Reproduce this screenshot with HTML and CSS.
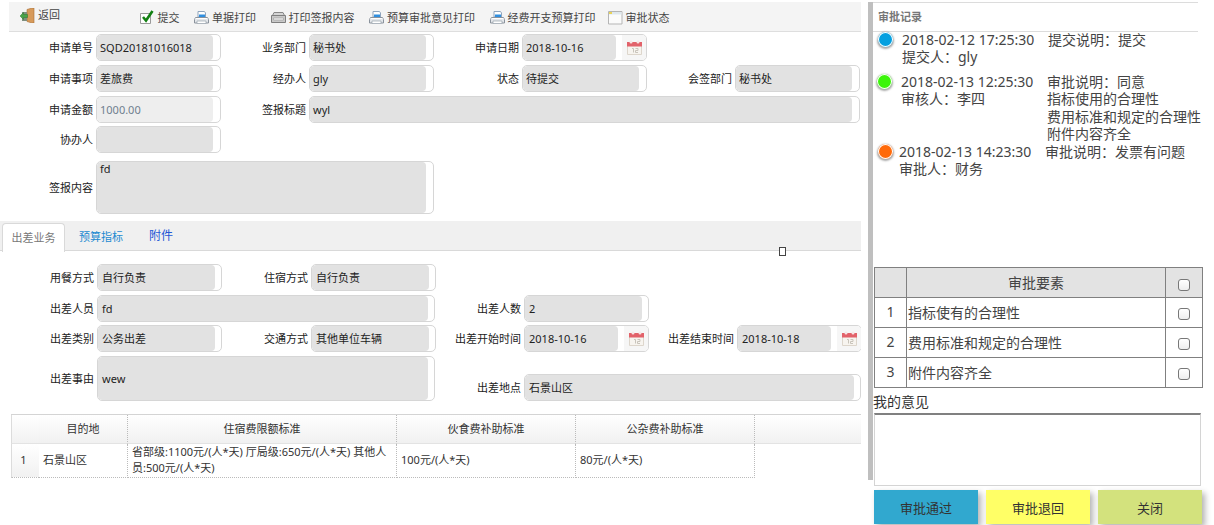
FILE: index.html
```html
<!DOCTYPE html>
<html lang="zh-CN">
<head>
<meta charset="utf-8">
<title>审批</title>
<link rel="stylesheet" href="styles.css">
</head>
<body>
<svg class="defs" width="0" height="0" aria-hidden="true">
  <symbol id="i-print" viewBox="0 0 15 15">
    <path d="M4 1.500h6.500L11.500 3v4h-7.500z" fill="#fff" stroke="#8ea4bd"/>
    <path d="M5 4.500h6v3H5z" fill="#2f8fe0"/>
    <path d="M1.500 7.500h12l1 2v3.500h-14V9.500z" fill="#e3e6ea" stroke="#8a929c"/>
    <path d="M3 11h9v2.500H3z" fill="#fff" stroke="#9aa3ad" stroke-width=".7"/>
    <path d="M1.500 8.500h12" stroke="#fff"/>
  </symbol>
  <symbol id="i-cal" viewBox="0 0 15 15">
    <path d="M.5 3h14v11.500H.5z" fill="#f7f4ef" stroke="#ddd6cc"/>
    <path d="M0 2h15v4.500H0z" fill="#e2626a"/>
    <circle cx="4" cy="2" r="1.500" fill="#f6e6e6"/>
    <circle cx="11" cy="2" r="1.500" fill="#f6e6e6"/>
    <path d="M5 8.500h1.500v4M8.500 8.500h2.500v2h-2.500v2h2.500" fill="none" stroke="#c9c4bb"/>
  </symbol>
</svg>

<main class="left">
  <nav class="toolbar">
    <a class="tool back">
      <svg class="icon" viewBox="0 0 15 15"><path d="M7 1.500l5-1.500h2v15h-2l-5-1.500z" fill="#d79a5a" stroke="#a76f35" stroke-width=".6"/><path d="M2 4h5v9H2z" fill="#7f8f7f"/><path d="M0 8l3.500-3.500v2h4v3h-4v2z" fill="#4aa34a" stroke="#2f7a2f" stroke-width=".5"/></svg>
      <span>返回</span>
    </a>
    <a class="tool">
      <svg class="icon" viewBox="0 0 15 15"><path d="M.5 3.500h10v10H.5z" fill="#fff" stroke="#9a9a9a"/><path d="M3 7l3 3.500 6.500-9.500" fill="none" stroke="#128012" stroke-width="2.600"/></svg>
      <span>提交</span>
    </a>
    <a class="tool"><svg class="icon"><use href="#i-print"/></svg><span>单据打印</span></a>
    <a class="tool">
      <svg class="icon" viewBox="0 0 15 15"><path d="M3 2.500h9l1.500 3H1.500z" fill="#d5d5d5" stroke="#888"/><path d="M.5 5.500h14v7H.5z" fill="#c9c9c9" stroke="#7f7f7f"/><path d="M2.500 8h10v2h-10z" fill="#f2f2f2" stroke="#999" stroke-width=".6"/></svg>
      <span>打印签报内容</span>
    </a>
    <a class="tool"><svg class="icon"><use href="#i-print"/></svg><span>预算审批意见打印</span></a>
    <a class="tool"><svg class="icon"><use href="#i-print"/></svg><span>经费开支预算打印</span></a>
    <a class="tool status">
      <svg class="icon" viewBox="0 0 15 15"><path d="M.5 1.500h13.500v12.500H.5z" fill="#fbfbfb" stroke="#b5b5b5"/><path d="M1 2h12.500v2.500H1z" fill="#dfe8ee"/><path d="M1 2h3v2H1z" fill="#e8d35a"/></svg>
      <span>审批状态</span>
    </a>
  </nav>

  <section class="form top-form">
    <div class="cell"><label>申请单号</label><div class="field"><div class="val">SQD20181016018</div></div></div>
    <div class="cell"><label>业务部门</label><div class="field"><div class="val">秘书处</div></div></div>
    <div class="cell"><label>申请日期</label><div class="field"><div class="val date">2018-10-16</div><div class="cal"><svg class="cal-icon"><use href="#i-cal"/></svg></div></div></div>
    <div class="cell"></div>

    <div class="cell"><label>申请事项</label><div class="field"><div class="val">差旅费</div></div></div>
    <div class="cell"><label>经办人</label><div class="field"><div class="val">gly</div></div></div>
    <div class="cell"><label>状态</label><div class="field"><div class="val">待提交</div></div></div>
    <div class="cell"><label>会签部门</label><div class="field"><div class="val">秘书处</div></div></div>

    <div class="cell"><label>申请金额</label><div class="field"><div class="val off">1000.00</div></div></div>
    <div class="cell span3"><label>签报标题</label><div class="field"><div class="val">wyl</div></div></div>

    <div class="cell"><label>协办人</label><div class="field"><div class="val"></div></div></div>
    <div class="cell span3"></div>

    <div class="cell span2 tall"><label>签报内容</label><div class="field"><div class="val area">fd</div></div></div>
  </section>

  <div class="tabs">
    <a class="tab active">出差业务</a>
    <a class="tab budget">预算指标</a>
    <a class="tab attach">附件</a>
    <span class="stray"></span>
  </div>

  <section class="form trip-form">
    <div class="cell"><label>用餐方式</label><div class="field"><div class="val">自行负责</div></div></div>
    <div class="cell"><label>住宿方式</label><div class="field"><div class="val">自行负责</div></div></div>
    <div class="cell span2"></div>

    <div class="cell span2"><label>出差人员</label><div class="field"><div class="val">fd</div></div></div>
    <div class="cell"><label>出差人数</label><div class="field"><div class="val">2</div></div></div>
    <div class="cell"></div>

    <div class="cell"><label>出差类别</label><div class="field"><div class="val">公务出差</div></div></div>
    <div class="cell"><label>交通方式</label><div class="field"><div class="val">其他单位车辆</div></div></div>
    <div class="cell"><label>出差开始时间</label><div class="field"><div class="val date">2018-10-16</div><div class="cal"><svg class="cal-icon"><use href="#i-cal"/></svg></div></div></div>
    <div class="cell"><label>出差结束时间</label><div class="field"><div class="val date">2018-10-18</div><div class="cal"><svg class="cal-icon"><use href="#i-cal"/></svg></div></div></div>

    <div class="cell span2 tall"><label>出差事由</label><div class="field"><div class="val">wew</div></div></div>
    <div class="cell span2 low"><label>出差地点</label><div class="field"><div class="val">石景山区</div></div></div>
  </section>

  <table class="grid">
    <colgroup>
      <col class="c-n"><col class="c-dest"><col class="c-room"><col class="c-food"><col class="c-misc"><col class="c-rest">
    </colgroup>
    <thead>
      <tr><th class="no-line"></th><th>目的地</th><th>住宿费限额标准</th><th>伙食费补助标准</th><th>公杂费补助标准</th><th class="no-line"></th></tr>
    </thead>
    <tbody>
      <tr>
        <td class="num">1</td>
        <td>石景山区</td>
        <td>省部级:1100元/(人*天) 厅局级:650元/(人*天) 其他人员:500元/(人*天)</td>
        <td>100元/(人*天)</td>
        <td>80元/(人*天)</td>
        <td class="blank"></td>
      </tr>
    </tbody>
  </table>
</main>

<div class="splitter"></div>

<aside class="right">
  <h2 class="panel-title">审批记录</h2>
  <div class="timeline">
    <div class="entry first">
      <i class="dot blue"></i>
      <div class="who"><div>2018-02-12 17:25:30</div><div>提交人：gly</div></div>
      <div class="note"><div>提交说明：提交</div></div>
    </div>
    <div class="entry second">
      <i class="dot green"></i>
      <div class="who"><div>2018-02-13 12:25:30</div><div>审核人：李四</div></div>
      <div class="note"><div>审批说明：同意</div><div>指标使用的合理性</div><div>费用标准和规定的合理性</div><div>附件内容齐全</div></div>
    </div>
    <div class="entry third">
      <i class="dot orange"></i>
      <div class="who"><div>2018-02-13 14:23:30</div><div>审批人：财务</div></div>
      <div class="note"><div>审批说明：发票有问题</div></div>
    </div>
  </div>

  <table class="elements">
    <colgroup><col class="e-n"><col class="e-name"><col class="e-check"></colgroup>
    <thead>
      <tr><th></th><th>审批要素</th><th><input type="checkbox" class="box"></th></tr>
    </thead>
    <tbody>
      <tr><td class="e-num">1</td><td>指标使有的合理性</td><td class="e-box"><input type="checkbox" class="box"></td></tr>
      <tr><td class="e-num">2</td><td>费用标准和规定的合理性</td><td class="e-box"><input type="checkbox" class="box"></td></tr>
      <tr><td class="e-num">3</td><td>附件内容齐全</td><td class="e-box"><input type="checkbox" class="box"></td></tr>
    </tbody>
  </table>

  <div class="opinion-label">我的意见</div>
  <textarea class="opinion"></textarea>

  <div class="actions">
    <button class="btn pass">审批通过</button>
    <button class="btn back-btn">审批退回</button>
    <button class="btn close">关闭</button>
  </div>
</aside>
</body>
</html>
```

FILE: styles.css
```css
* { box-sizing: border-box; }
html, body { margin: 0; height: 525px; overflow: hidden; background: #fff; }
body {
  display: flex;
  align-items: flex-start;
  font-family: "Noto Sans", "Noto Sans CJK SC", sans-serif;
  font-size: 11px;
  color: #222;
}
.defs { position: absolute; }

/* left column */
.left { width: 861px; flex: none; height: 525px; overflow: hidden; padding-top: 2px; }

.toolbar {
  margin-left: 9px;
  height: 30px;
  background: #f4f4f4;
  border-bottom: 1px solid #dedede;
  display: flex;
  align-items: center;
  padding-left: 11px;
  gap: 14.500px;
  color: #444;
  padding-top: 2px;
}
.tool { display: flex; align-items: center; gap: 3px; white-space: nowrap; line-height: 14px; }
.tool.back { margin-right: 65px; margin-top: -5px; }
.tool.status { margin-left: -2.500px; }
.icon { width: 15px; height: 15px; flex: none; }

.form { display: grid; }
.top-form {
  margin-top: 2px;
  padding-left: 9px;
  grid-template-columns: repeat(4, 213px);
  grid-template-rows: 31px 31px 30px 35px 53px;
}
.trip-form {
  margin-top: 13px;
  padding-left: 10px;
  grid-template-columns: 214px 213px 213px 213px;
  grid-template-rows: 31px 30px 31px 45px;
}
.cell { display: flex; align-items: center; height: 27px; gap: 3px; }
.cell label { width: 84px; flex: none; text-align: right; color: #222; white-space: nowrap; padding-bottom: 1px; }
.field {
  flex: none;
  width: 125px;
  height: 100%;
  display: flex;
  border: 1px solid #d6d6d6;
  border-radius: 5px;
  background: #fff;
  overflow: hidden;
}
.val {
  flex: 1;
  min-width: 0;
  margin-right: 7px;
  background: #e2e2e2;
  border-radius: 4px;
  padding-left: 3px;
  padding-bottom: 1px;
  display: flex;
  align-items: center;
  font-size: 11px;
  color: #222;
  white-space: nowrap;
}
.trip-form .val { padding-left: 4px; margin-right: 6px; }
.val.date, .trip-form .val.date { flex: none; width: 93px; margin-right: 0; }
.val.off { background: #eee; color: #6f7f8f; }
.val.area { align-items: flex-start; padding-top: 0; line-height: 14px; }
.cal {
  margin-left: auto;
  width: 24px;
  background: #f6f6f6;
  display: flex;
  align-items: center;
  justify-content: center;
}
.cal-icon { width: 15px; height: 15px; }

.span2 { grid-column: span 2; }
.span3 { grid-column: span 3; }
.span2 .field, .span3 .field { flex: 1; margin-right: 1px; }
.trip-form .span2 .field { margin-right: 2px; }
.tall { height: 100%; }
.low { align-self: end; }

.tabs {
  position: relative;
  margin-top: 7px;
  height: 30px;
  background: #f0f0f0;
  border-bottom: 1px solid #d9d9d9;
  display: flex;
  padding-left: 2px;
}
.tab { white-space: nowrap; line-height: 28px; padding-top: 2px; }
.tab.active {
  width: 63px;
  height: 29px;
  margin-top: 2px;
  padding-top: 0;
  text-align: center;
  background: #fff;
  border: 1px solid #d9d9d9;
  border-bottom: 0;
  border-radius: 4px 4px 0 0;
  color: #777;
}
.tab.budget { margin-left: 14px; color: #1c8ad1; }
.tab.attach { margin-left: 26px; color: #2458d6; font-size: 12px; padding-top: 1px; }
.stray {
  position: absolute;
  left: 779px;
  top: 26px;
  width: 7px;
  height: 9px;
  border: 1px solid #444;
  background: #fff;
}

/* data table */
.grid {
  margin: 13px 0 0 11px;
  width: 850px;
  table-layout: fixed;
  border-collapse: separate;
  border-spacing: 0;
  border-top: 1px solid #d4d4d4;
  font-size: 11px;
  color: #333;
}
.c-n { width: 28px; }
.c-dest { width: 89px; }
.c-room { width: 269px; }
.c-food { width: 179px; }
.c-misc { width: 179px; }
.c-rest { width: 106px; }
.grid th {
  height: 29px;
  padding: 0 0 2px;
  font-weight: 400;
  background: linear-gradient(#fff, #f1f1f1);
  border-bottom: 1px solid #e3e3e3;
  border-right: 1px dotted #bbb;
}
.grid th.no-line { border-right: 0; }
.grid th:first-child { border-left: 1px solid #dcdcdc; }
.grid td {
  height: 34px;
  padding: 0 4px 1px;
  line-height: 16px;
  border-right: 1px dotted #bbb;
  border-bottom: 1px dotted #bbb;
}
.grid td.num {
  text-align: center;
  padding-right: 8px;
  background: linear-gradient(#fff, #f1f1f1);
  border-left: 1px solid #dcdcdc;
  border-right: 0;
}
.grid td.blank { border: 0; }

/* splitter */
.splitter { flex: none; width: 5px; height: 478px; margin-left: 7px; margin-top: 2px; background: #bfbfbf; }

/* right column */
.right { width: 341px; flex: none; font-size: 14px; color: #444; padding-top: 2px; }
.panel-title {
  margin: 0;
  width: 325px;
  height: 30px;
  border-top: 1px solid #dcdcdc;
  border-bottom: 1px solid #dcdcdc;
  padding: 7px 0 0 5px;
  font-size: 11px;
  line-height: 14px;
  font-weight: 700;
  color: #777;
}
.timeline { height: 236px; margin-top: -1px; }
.entry { display: flex; line-height: 17.400px; white-space: nowrap; }
.entry.first { height: 42px; padding-left: 5px; }
.entry.second { height: 70px; padding-left: 4px; }
.entry.third { padding-left: 5px; }
.dot {
  flex: none;
  width: 15px;
  height: 15px;
  border-radius: 50%;
  margin-top: 1px;
  box-shadow: 0 1px 2px 1px rgba(0,0,0,.35), inset 0 0 0 1px #fff;
}
.blue { background: #05a0e0; }
.green { background: #3cf50a; }
.orange { background: #ff6a0a; }
.who { width: 146px; margin-left: 9px; flex: none; }
.third .who { margin-left: 6px; }

.elements {
  margin-left: 1px;
  width: 328px;
  table-layout: fixed;
  border-collapse: collapse;
  font-size: 14px;
}
.e-n { width: 32px; }
.e-name { width: 259px; }
.e-check { width: 37px; }
.elements th, .elements td { border: 1px solid #808080; height: 30px; padding: 0; font-weight: 400; }
.elements th { background: #e3e3e3; height: 30px; padding-bottom: 2px; }
.elements td { padding: 0 0 2px 1px; }
.elements td.e-num { text-align: center; padding-left: 0; }
.elements td.e-box { text-align: center; padding: 0; }
.elements th:last-child { text-align: center; padding: 2px 0 0; }
.box {
  appearance: none;
  display: inline-block;
  width: 12px;
  height: 12px;
  margin: 0;
  vertical-align: middle;
  border: 1px solid #777;
  border-radius: 3px;
  background: linear-gradient(#fff, #eee);
}

.opinion-label { margin-top: 4px; line-height: 19px; height: 21px; color: #333; }
.opinion {
  display: block;
  margin: 0 0 0 1px;
  width: 327px;
  height: 73px;
  resize: none;
  border: 1px solid #d4d4d4;
  border-top: 2px solid #808080;
  background: #fff;
  outline: 0;
}
.actions { display: flex; gap: 8px; margin: 4px 0 0 1px; }
.btn {
  width: 104px;
  height: 34px;
  border: 0;
  padding: 0;
  font-family: inherit;
  font-size: 13px;
  color: #333;
  box-shadow: 3px 3px 6px rgba(0,0,0,.3);
}
.pass { background: #31a8cf; }
.back-btn { background: #ffff66; }
.close { background: #d3e27d; }
```
